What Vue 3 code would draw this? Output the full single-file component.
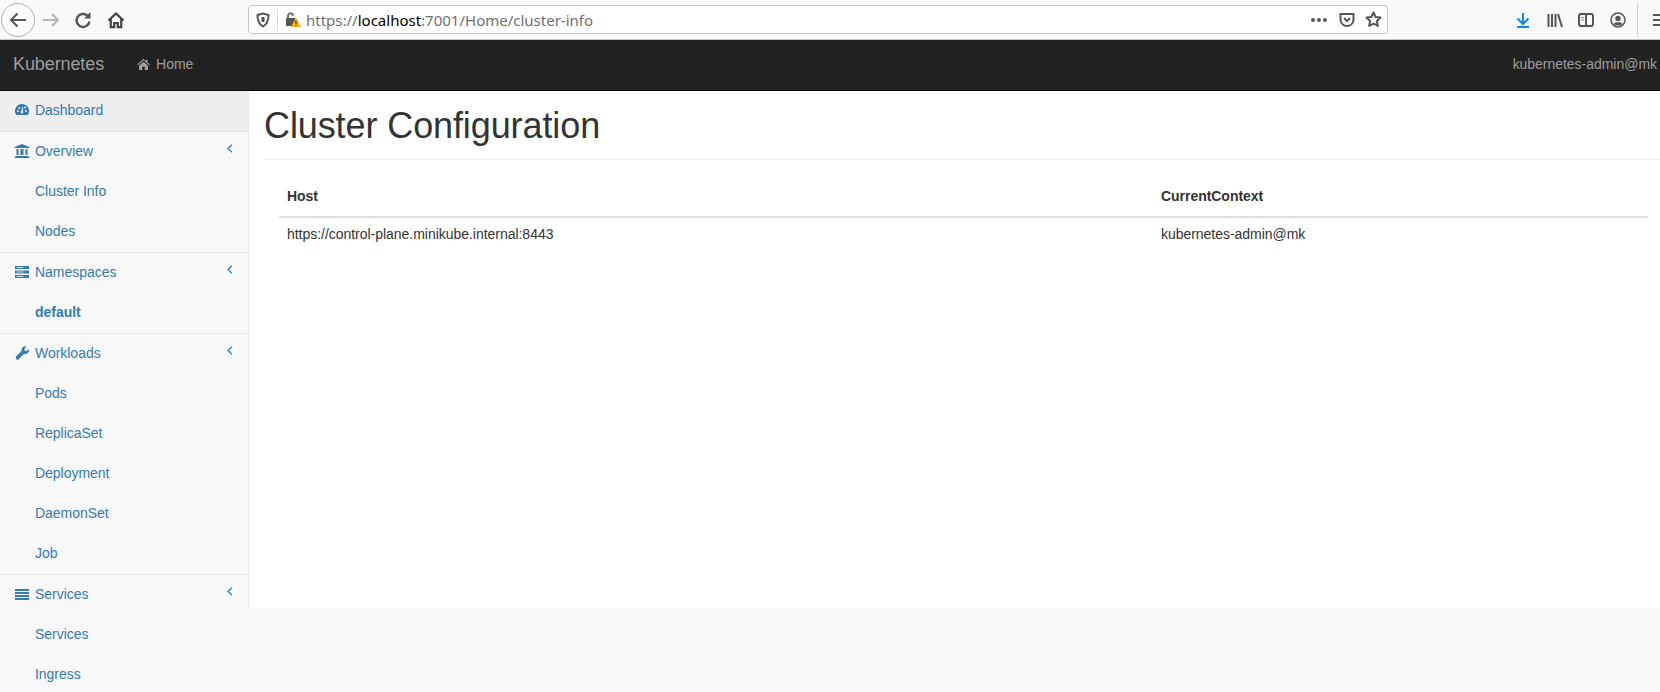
<script setup>
const sections = [
  { label: 'Overview', icon: 'bank', items: ['Cluster Info', 'Nodes'] },
  { label: 'Namespaces', icon: 'server', items: ['default'], bold: true },
  { label: 'Workloads', icon: 'wrench', items: ['Pods', 'ReplicaSet', 'Deployment', 'DaemonSet', 'Job'] },
  { label: 'Services', icon: 'list', items: ['Services', 'Ingress'] }
]
</script>

<template>
  <div class="app">
    <header class="chrome">
      <div class="nav-btns">
        <span class="back">
          <svg width="20" height="20" viewBox="0 0 20 20" fill="none" stroke="#555" stroke-width="2"><path d="M18 10H3M9.500 3.500 3 10l6.500 6.500" /></svg>
        </span>
        <svg class="fwd" width="18" height="18" viewBox="0 0 18 18" fill="none" stroke="#b5b5b5" stroke-width="2"><path d="M1 9h15M10 3l6 6-6 6" /></svg>
        <svg class="reload" width="18" height="18" viewBox="0 0 18 18" fill="none" stroke="#555" stroke-width="2.400"><path d="M15.500 10.500a6.500 6.500 0 1 1-2.200-6" /><path d="M16.500 1v6.500H10Z" fill="#555" stroke="none" /></svg>
        <svg class="home" width="18" height="18" viewBox="0 0 18 18" fill="none" stroke="#444" stroke-width="2.200"><path d="M1.500 9.500 9 2.500l7.500 7M3.800 8v8.200h3.400v-4h3.600v4h3.400V8" /></svg>
      </div>
      <div class="urlbar">
        <svg class="shield" width="16" height="16" viewBox="0 0 16 16" fill="none" stroke="#555" stroke-width="2"><path d="M2.500 3 8 1.500 13.500 3c0 5-1 9-5.500 11.500C3.500 12 2.500 8 2.500 3Z" /><path d="M8 5v5" stroke-width="3" /></svg>
        <span class="sep"></span>
        <svg class="lock" width="15" height="15" viewBox="0 0 15 15"><path d="M2 6V3.800a2.500 2.500 0 0 1 5 0" fill="none" stroke="#555" stroke-width="1.600" /><path d="M0 6h9v8H0z" fill="#555" /><path d="M10 5.500 15 15H5Z" fill="#f5b50e" /><path d="M10 8.500v3.500M10 12.800v1.200" stroke="#333" stroke-width="1.100" /></svg>
        <span class="url"><span class="dim">https://</span>localhost<span class="dim">:7001/Home/cluster-info</span></span>
        <span class="url-end">
          <span class="dots"><i></i><i></i><i></i></span>
          <svg width="16" height="16" viewBox="0 0 16 16" fill="none" stroke="#555" stroke-width="2"><path d="M1.500 2h13v5.500a6.500 6.500 0 0 1-13 0Z" /><path d="m5 6 3 3 3-3" /></svg>
          <svg width="17" height="17" viewBox="0 0 17 17" fill="none" stroke="#555" stroke-width="2" stroke-linejoin="round"><path d="m8.500 1.500 2.100 4.500 4.900.600-3.600 3.400.900 4.900-4.300-2.400-4.300 2.400.900-4.900L1.500 6.600 6.400 6Z" /></svg>
        </span>
      </div>
      <div class="tools">
        <svg class="dl" width="16" height="16" viewBox="0 0 16 16" fill="none" stroke="#0a84ff" stroke-width="2"><path d="M8 1v10M2.500 6.500 8 12l5.500-5.500M2 15h12" /></svg>
        <svg class="lib" width="16" height="16" viewBox="0 0 16 16" fill="none" stroke="#555" stroke-width="2"><path d="M1.500 2v13M5 2v13M8.500 2v13M11 2l4 13" /></svg>
        <svg class="side" width="16" height="16" viewBox="0 0 16 16" fill="none" stroke="#555" stroke-width="2"><rect x="1" y="2" width="14" height="12" rx="2" /><path d="M8 2v12" /><path d="M3.500 5.500h2M3.500 8h2" stroke-width="1" /></svg>
        <svg class="acct" width="16" height="16" viewBox="0 0 16 16"><circle cx="8" cy="8" r="7" fill="none" stroke="#555" stroke-width="1.500" /><circle cx="8" cy="6.500" r="2.700" fill="#555" /><path d="M3.500 12c1-2.500 8-2.500 9 0-2 2-7 2-9 0Z" fill="#555" /></svg>
        <span class="tool-sep"></span>
        <span class="burger"><i></i><i></i><i></i></span>
      </div>
    </header>

    <nav class="navbar">
      <span class="brand">Kubernetes</span>
      <span class="nav-home">
        <svg width="13" height="11" viewBox="0 0 13 11"><path d="M6.500 0 0 5.500l.700.800L6.500 1.500l5.800 4.800.700-.800L10.500 3.400V.700H9v1.500ZM2 6.500V11h3.300V7.800h2.400V11H11V6.500L6.500 2.800Z" fill="#9d9d9d" /></svg>
        Home
      </span>
      <span class="user">kubernetes-admin@mk</span>
    </nav>

    <div class="body">
      <aside class="sidebar">
        <div class="row top active">
          <svg class="ico" width="14" height="12" viewBox="0 0 14 12"><path d="M7 0a7 7 0 0 0-6 10.600c.2.300.4.400.7.400h10.600c.3 0 .5-.1.700-.4A7 7 0 0 0 7 0ZM3 8a1 1 0 1 1 0-2 1 1 0 0 1 0 2Zm1.300-3a1 1 0 1 1 0-2 1 1 0 0 1 0 2ZM7 9.500a1.300 1.300 0 0 1-.7-2.400L7.300 3c.2-.5.900-.3.800.2L7.900 7.200A1.300 1.300 0 0 1 7 9.500Zm3-5a1 1 0 1 1 0-2 1 1 0 0 1 0 2ZM11 8a1 1 0 1 1 0-2 1 1 0 0 1 0 2Z" fill="#337ab7" fill-rule="evenodd" /></svg>
          <span>Dashboard</span>
        </div>
        <section v-for="s in sections" :key="s.label" class="group">
          <div class="row top">
            <svg v-if="s.icon === 'bank'" class="ico" width="15" height="14" viewBox="0 0 15 14"><path d="M7.500 0 15 3v1H0V3ZM1 12h13v1H1ZM0 13h15v1H0ZM2 5h2v6H2Zm4 0h3v6H6Zm5 0h2v6h-2Z" fill="#337ab7" /></svg>
            <svg v-else-if="s.icon === 'server'" class="ico" width="14" height="12" viewBox="0 0 14 12"><path d="M0 0h14v3H0Zm0 4.500h14v3H0ZM0 9h14v3H0Z" fill="#337ab7" /><path d="M1.500 1.500h7M1.500 6h7M1.500 10.500h7" stroke="#f8f8f8" stroke-width=".8" /></svg>
            <svg v-else-if="s.icon === 'wrench'" class="ico" width="14" height="14" viewBox="0 0 14 14"><path d="M.800 10.800 6.600 5a4 4 0 0 1 5-4.600L9.300 2.700 9.800 4.700l2 .500 2.200-2.300a4 4 0 0 1-5 4.900l-5.500 5.700c-1.400 1-3.300-1.200-2.700-2.700Z" fill="#337ab7" /></svg>
            <svg v-else class="ico" width="14" height="11" viewBox="0 0 14 11"><path d="M0 0h14v2H0Zm0 3h14v2H0Zm0 3h14v2H0Zm0 3h14v2H0Z" fill="#337ab7" /></svg>
            <span>{{ s.label }}</span>
            <svg class="chev" width="6" height="9" viewBox="0 0 6 9" fill="none" stroke="#337ab7" stroke-width="1.200"><path d="M5 .800 1 4.500 5 8.200" /></svg>
          </div>
          <div v-for="item in s.items" :key="item" class="row sub" :class="{ strong: s.bold }">{{ item }}</div>
        </section>
      </aside>
      <main class="page">
        <h1>Cluster Configuration</h1>
        <div class="content">
          <table>
            <thead>
              <tr><th class="c1">Host</th><th>CurrentContext</th></tr>
            </thead>
            <tbody>
              <tr><td>https://control-plane.minikube.internal:8443</td><td>kubernetes-admin@mk</td></tr>
            </tbody>
          </table>
        </div>
      </main>
    </div>
  </div>
</template>

<style>
html, body { margin: 0; overflow: hidden; background: #f8f8f8; }
</style>

<style scoped>
.app { width: 1660px; height: 692px; overflow: hidden; display: flex; flex-direction: column; font-family: "Liberation Sans", Arial, sans-serif; font-size: 14px; line-height: 20px; color: #333; letter-spacing: -0.03px; }
.chrome { height: 39px; flex: none; background: #f9f9fa; border-bottom: 1px solid #c8c8c8; display: flex; align-items: center; position: relative; }
.nav-btns { width: 248px; display: flex; align-items: center; flex: none; }
.back { width: 32px; height: 32px; margin-left: 1px; border: 1px solid #b1b1b3; border-radius: 50%; display: flex; align-items: center; justify-content: center; background: #fbfbfb; }
.fwd { margin-left: 7px; }
.reload { margin-left: 14px; }
.home { margin-left: 15px; }
.urlbar { width: 1140px; flex: none; height: 29px; box-sizing: border-box; border: 1px solid #c4c4c4; border-radius: 4px; background: #fff; display: flex; align-items: center; padding-left: 6px; }
.shield, .lock { flex: none; }
.sep { width: 1px; height: 22px; background: #d8d8d8; margin: 0 8px 0 6px; flex: none; }
.url { margin-left: 5px; font-family: "Noto Sans", sans-serif; font-size: 15px; letter-spacing: 0; color: #000; white-space: nowrap; }
.dim { color: #6f6f73; }
.url-end { margin-left: auto; display: flex; align-items: center; gap: 10px; padding-right: 5px; }
.dots { display: flex; gap: 2px; margin-right: 2px; }
.dots i { width: 4px; height: 4px; border-radius: 50%; background: #555; }
.tools { display: flex; align-items: center; margin-left: 127px; flex: none; width: 145px; }
.tools svg { flex: none; }
.lib { margin-left: 16px; }
.side { margin-left: 15px; }
.acct { margin-left: 16px; }
.tool-sep { width: 1px; height: 34px; background: #d4d4d4; margin-left: 11px; flex: none; }
.burger { display: flex; flex-direction: column; gap: 3px; margin-left: 15px; width: 16px; flex: none; }
.burger i { height: 2px; background: #555; }
.navbar { height: 50px; flex: none; box-sizing: content-box; background: #222; border-bottom: 1px solid #080808; color: #9d9d9d; display: flex; align-items: center; }
.brand, .nav-home, .user { position: relative; top: -1px; }
.brand { font-size: 18px; margin-left: 13px; letter-spacing: -0.1px; }
.nav-home { margin-left: 33px; display: flex; align-items: center; gap: 6px; }
.user { margin-left: auto; padding-right: 3px; }
.body { flex: 1; min-height: 0; display: flex; align-items: flex-start; overflow: hidden; }
.sidebar { width: 248px; flex: none; color: #337ab7; }
.row { height: 40px; display: flex; align-items: center; box-sizing: border-box; padding-bottom: 2px; }
.top { padding-left: 14px; position: relative; }
.top .ico { width: 16px; flex: none; margin-right: 5px; }
.active { background: #eee; height: 41px; border-bottom: 1px solid #e7e7e7; }
.group { border-bottom: 1px solid #e7e7e7; }
.chev { position: absolute; left: 227px; top: 12px; }
.sub { padding-left: 35px; }
.strong { font-weight: 700; }
.page { flex: 1; min-width: 0; height: 517px; box-sizing: border-box; background: #fff; border-left: 1px solid #e7e7e7; padding-left: 15px; }
h1 { margin: 15px 0 0; font-size: 36px; font-weight: 500; line-height: 40px; padding-bottom: 13px; border-bottom: 1px solid #eee; color: #333; letter-spacing: -0.1px; }
.content { padding: 15px 12px 0 15px; }
table { width: 100%; border-collapse: collapse; table-layout: fixed; }
th, td { text-align: left; padding: 8px; line-height: 20px; }
th { border-bottom: 2px solid #ddd; padding-top: 11px; padding-bottom: 10px; font-weight: 700; }
td { padding-top: 6px; }
.c1 { width: 62.670%; }
</style>
